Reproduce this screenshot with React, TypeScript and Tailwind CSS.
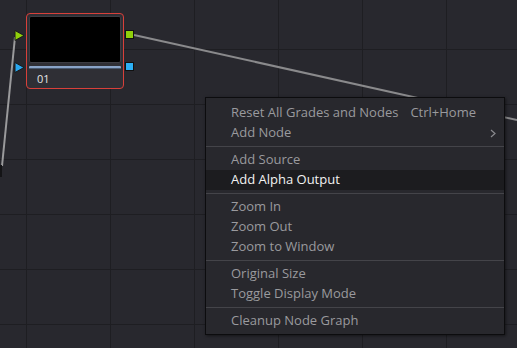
import React from "react";

const vLines = [26.5, 110.5, 194.5, 278.5, 362.5, 446.5];
const hLines = [49.5, 104.5, 159.5, 214.5, 269.5, 324.5];

type Item = { label: string; shortcut?: string; sub?: boolean; active?: boolean };

const groups: Item[][] = [
  [
    { label: "Reset All Grades and Nodes", shortcut: "Ctrl+Home" },
    { label: "Add Node", sub: true },
  ],
  [{ label: "Add Source" }, { label: "Add Alpha Output", active: true }],
  [{ label: "Zoom In" }, { label: "Zoom Out" }, { label: "Zoom to Window" }],
  [{ label: "Original Size" }, { label: "Toggle Display Mode" }],
  [{ label: "Cleanup Node Graph" }],
];

export default function App() {
  return (
    <div
      className="relative w-[517px] h-[348px] overflow-hidden bg-[#28282e]"
      style={{ fontFamily: '"Open Sans", "Noto Sans", sans-serif' }}
    >
      <svg className="absolute inset-0" width={517} height={348}>
        {vLines.map((x) => (
          <line key={"v" + x} x1={x} y1={0} x2={x} y2={348} stroke="#1e1e22" strokeWidth={1} />
        ))}
        {hLines.map((y) => (
          <line key={"h" + y} x1={0} y1={y} x2={517} y2={y} stroke="#1e1e22" strokeWidth={1} />
        ))}
        <line x1={134} y1={35} x2={517} y2={120} stroke="#8a8a8c" strokeWidth={2} />
        <line x1={15} y1={37} x2={2} y2={166} stroke="#9a9a9c" strokeWidth={2} />
        <rect x={-4} y={165} width={6} height={12} fill="#141416" />
      </svg>

      {/* Node */}
      <div className="absolute left-[26px] top-[13px] w-[98px] h-[76px] rounded-[4px] border border-[#d8403a] bg-[#2f2f35] p-[2px]">
        <div className="h-[47px] w-full rounded-[2px] border border-[#3c3c42] bg-black" />
        <div className="mt-[3px] h-[3px] w-full rounded-[1px] bg-[#8aa4c8] border-b border-[#4a5a70]" />
        <div className="mt-[3px] pl-[8px] text-[11px] leading-[13px] text-[#e6e6e6]">01</div>
      </div>

      {/* input ports */}
      <svg className="absolute left-[14px] top-[30px]" width={11} height={11}>
        <polygon points="1,0.5 10,5.5 1,10.5" fill="#8fcf0a" stroke="#1a1a1a" strokeWidth={1} />
      </svg>
      <svg className="absolute left-[14px] top-[62px]" width={11} height={11}>
        <polygon points="1,0.5 10,5.5 1,10.5" fill="#29a8f0" stroke="#1a1a1a" strokeWidth={1} />
      </svg>
      {/* output ports */}
      <div className="absolute left-[125px] top-[30px] w-[9px] h-[9px] bg-[#8fcf0a] border border-[#111]" />
      <div className="absolute left-[125px] top-[62px] w-[9px] h-[9px] bg-[#2cb0f5] border border-[#111]" />

      {/* Context menu */}
      <div className="absolute left-[205px] top-[97px] w-[300px] border border-[#0c0c0e] bg-[#28282d] pt-[5px] pb-[3px] shadow-[1px_1px_3px_rgba(0,0,0,0.5)]">
        {groups.map((g, gi) => (
          <div key={gi}>
            {gi > 0 && (
              <div className="py-[3px]">
                <div className="h-px bg-[#444449]" />
              </div>
            )}
            {g.map((it) => (
              <div
                key={it.label}
                className={
                  "relative flex h-[20px] items-center pl-[25px] text-[13px] " +
                  (it.active ? "bg-[#1c1c1f] text-[#f2f2f2]" : "text-[#9a9a9e]")
                }
              >
                <span>{it.label}</span>
                {it.shortcut && <span className="ml-[12px]">{it.shortcut}</span>}
                {it.sub && (
                  <svg className="absolute left-[284px] top-[6px]" width={6} height={9}>
                    <polyline points="1,1 5,4.5 1,8" fill="none" stroke="#8a8a8e" strokeWidth={1.2} />
                  </svg>
                )}
              </div>
            ))}
          </div>
        ))}
      </div>
    </div>
  );
}
